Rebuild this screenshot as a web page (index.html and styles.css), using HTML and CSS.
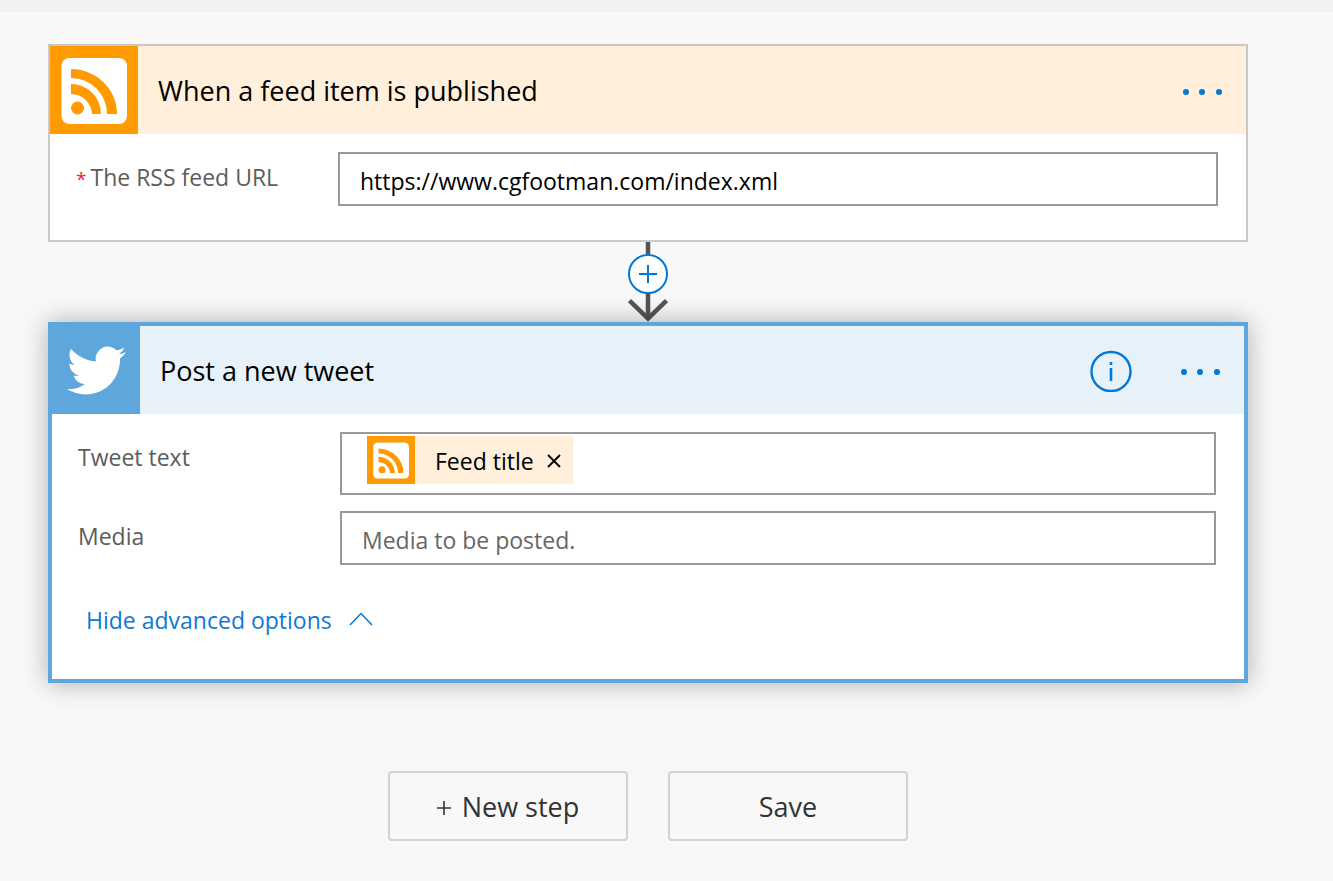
FILE: index.html
```html
<!DOCTYPE html>
<html lang="en">
<head>
<meta charset="utf-8">
<title>Flow designer</title>
<meta name="viewport" content="width=device-width, initial-scale=1">
<link rel="stylesheet" href="styles.css">
</head>
<body>
<svg class="sprite" aria-hidden="true">
  <symbol id="rss" viewBox="0 0 88 88">
    <rect x="11.500" y="12" width="65.500" height="66" rx="8" fill="#fff"/>
    <circle cx="27.500" cy="62" r="6.500" fill="#ff9b00"/>
    <path d="M21 38A30 30 0 0 1 51 68H42A21 21 0 0 0 21 48ZM21 23A46 45 0 0 1 67 68H57A36 36 0 0 0 21 32Z" fill="#ff9b00"/>
  </symbol>
  <symbol id="dots" viewBox="0 0 40 8">
    <circle cx="4" cy="5" r="3"/><circle cx="20" cy="5" r="3"/><circle cx="37" cy="5" r="3"/>
  </symbol>
</svg>
<div class="topbar"></div>
<main class="canvas">
  <section class="card card-trigger">
    <header class="card-header">
      <span class="tile"><svg class="tile-rss"><use href="#rss"/></svg></span>
      <h2 class="card-title">When a feed item is published</h2>
      <button class="icon-button" type="button" aria-label="Trigger menu"><svg class="dots"><use href="#dots"/></svg></button>
    </header>
    <div class="card-body">
      <label class="label" for="feed-url"><span class="required">*</span>The RSS feed URL</label>
      <input class="field" id="feed-url" type="text" value="https://www.cgfootman.com/index.xml">
    </div>
  </section>

  <div class="connector">
    <svg class="arrow" viewBox="0 0 40 80" aria-hidden="true">
      <path d="M20 0V76M1.500 58.500L20 76.500L38.500 58.500" fill="none" stroke="#555" stroke-width="4.500"/>
    </svg>
    <button class="insert" type="button" aria-label="Insert a new step">
      <svg class="insert-icon" viewBox="0 0 18 18"><path d="M9 0V18M0 9H18" stroke="#0078d7" stroke-width="2"/></svg>
    </button>
  </div>

  <section class="card card-action">
    <header class="card-header">
      <span class="tile"><svg class="bird" viewBox="0 0 24 24" fill="#fff"><path d="M23.953 4.57a10 10 0 01-2.825.775 4.958 4.958 0 002.163-2.723c-.951.555-2.005.959-3.127 1.184a4.92 4.92 0 00-8.384 4.482C7.69 8.095 4.067 6.13 1.64 3.162a4.822 4.822 0 00-.666 2.475c0 1.71.87 3.213 2.188 4.096a4.904 4.904 0 01-2.228-.616v.06a4.923 4.923 0 003.946 4.827 4.996 4.996 0 01-2.212.085 4.936 4.936 0 004.604 3.417 9.867 9.867 0 01-6.102 2.105c-.39 0-.779-.023-1.17-.067a13.995 13.995 0 007.557 2.209c9.053 0 13.998-7.496 13.998-13.985 0-.21 0-.42-.015-.63A9.935 9.935 0 0024 4.59z"/></svg></span>
      <h2 class="card-title">Post a new tweet</h2>
      <button class="icon-button" type="button" aria-label="Information">
        <svg class="info" viewBox="0 0 42 42"><circle cx="21" cy="21.500" r="19.500" fill="none" stroke="#0078d7" stroke-width="2.400"/><path d="M21 18V31M21 12V15" stroke="#0078d7" stroke-width="2.600"/></svg>
      </button>
      <button class="icon-button" type="button" aria-label="Action menu"><svg class="dots"><use href="#dots"/></svg></button>
    </header>
    <div class="card-body">
      <label class="label" for="tweet">Tweet text</label>
      <div class="field token-field">
        <span class="token">
          <svg class="token-icon"><use href="#rss"/></svg>
          <span class="token-text">Feed title</span>
          <button class="token-remove" type="button" aria-label="Remove Feed title"><svg class="cross" viewBox="0 0 14 16"><path d="M1 3L13 15M13 3L1 15" stroke="#000" stroke-width="1.900"/></svg></button>
        </span>
        <input class="token-input" id="tweet" type="text">
      </div>
      <label class="label" for="media">Media</label>
      <input class="field" id="media" type="text" placeholder="Media to be posted.">
    </div>
    <a class="advanced" href="#">Hide advanced options
      <svg class="chevron" viewBox="0 0 24 16"><path d="M1 13L12 1.500L23 13" fill="none" stroke="#0078d7" stroke-width="1.500"/></svg>
    </a>
  </section>

  <div class="actions">
    <button class="button" type="button"><svg class="plus" viewBox="0 0 14 18"><path d="M7 4V18M0 11H14" stroke="#333" stroke-width="1.600"/></svg>New step</button>
    <button class="button" type="button">Save</button>
  </div>
</main>
</body>
</html>
```
FILE: styles.css
```css
* { box-sizing: border-box; }

body {
  margin: 0;
  background: #f8f8f8;
  color: #000;
  font-family: "Segoe UI", "Open Sans", "Noto Sans", sans-serif;
  font-size: 23px;
}

button, input { font: inherit; color: inherit; }
button { border: 0; background: none; padding: 0; cursor: pointer; }
svg { display: block; flex: none; }

.sprite { position: absolute; width: 0; height: 0; }

.topbar { height: 12px; background: #f2f2f2; }

.canvas { padding: 32px 85px 40px 48px; }

.card { background: #fff; }
.card-trigger { border: 2px solid #c8c8c8; }
.card-action {
  border: 4px solid #5ea7dc;
  box-shadow: 0 0 24px rgba(0, 0, 0, 0.3);
  position: relative;
}

.card-header {
  display: flex;
  align-items: center;
  gap: 48px;
  height: 88px;
  padding-right: 24px;
}
.card-trigger .card-header { background: #ffefdb; }
.card-action .card-header { background: #e7f1fa; }

.tile {
  display: flex;
  align-items: center;
  justify-content: center;
  width: 88px;
  height: 88px;
}
.card-trigger .tile { background: #ff9b00; }
.card-action .tile { background: #5ea7dc; }
.tile-rss { width: 88px; height: 88px; }
.bird { width: 59px; height: 59px; }

.card-title {
  flex: 1;
  margin: 0 0 0 -28px;
  padding-top: 2px;
  font-size: 27px;
  font-weight: 400;
  line-height: 36px;
}

.icon-button { padding-top: 1px; }
.dots { width: 40px; height: 8px; fill: #0078d7; }
.info { width: 42px; height: 42px; }

.card-body {
  display: grid;
  grid-template-columns: 262px 1fr;
  row-gap: 16px;
  padding: 18px 28px 34px 26px;
}

.label { color: #5c5c5c; line-height: 32px; padding-top: 9px; }
.required { color: #f0232d; font-size: 19px; padding-right: 4px; }

.field {
  width: 100%;
  height: 54px;
  padding: 4px 20px 0;
  border: 2px solid #999;
  border-radius: 0;
  background: #fff;
}
.field::placeholder { color: #666; opacity: 1; }

.token-field {
  display: flex;
  align-items: flex-start;
  height: 63px;
  padding: 2px 25px 9px;
}
.token {
  display: flex;
  align-items: center;
  height: 48px;
  padding-right: 12px;
  background: #ffefdb;
}
.token-icon { width: 48px; height: 48px; background: #ff9b00; }
.token-text { padding: 2px 13px 0 20px; }
.cross { width: 14px; height: 16px; }
.token-input { flex: 1; min-width: 0; height: 48px; border: 0; outline: 0; background: none; }

.advanced {
  display: inline-flex;
  align-items: center;
  gap: 17px;
  margin: 5px 0 43px 34px;
  line-height: 32px;
  color: #0f78d4;
  text-decoration: none;
}
.chevron { width: 24px; height: 16px; }

.connector {
  display: grid;
  justify-items: center;
  height: 80px;
}
.arrow, .insert { grid-area: 1 / 1; }
.arrow { width: 40px; height: 80px; }
.insert {
  display: grid;
  place-items: center;
  width: 40px;
  height: 40px;
  margin-top: 12px;
  border: 2px solid #0078d7;
  border-radius: 50%;
  background: #fff;
}
.insert-icon { width: 18px; height: 18px; }

.actions {
  display: flex;
  justify-content: center;
  gap: 40px;
  margin-top: 88px;
}
.button {
  display: flex;
  align-items: center;
  justify-content: center;
  gap: 11px;
  width: 240px;
  height: 70px;
  border: 2px solid #d2d2d2;
  border-radius: 4px;
  color: #333;
  font-size: 27px;
}
.plus { width: 14px; height: 18px; }
```
